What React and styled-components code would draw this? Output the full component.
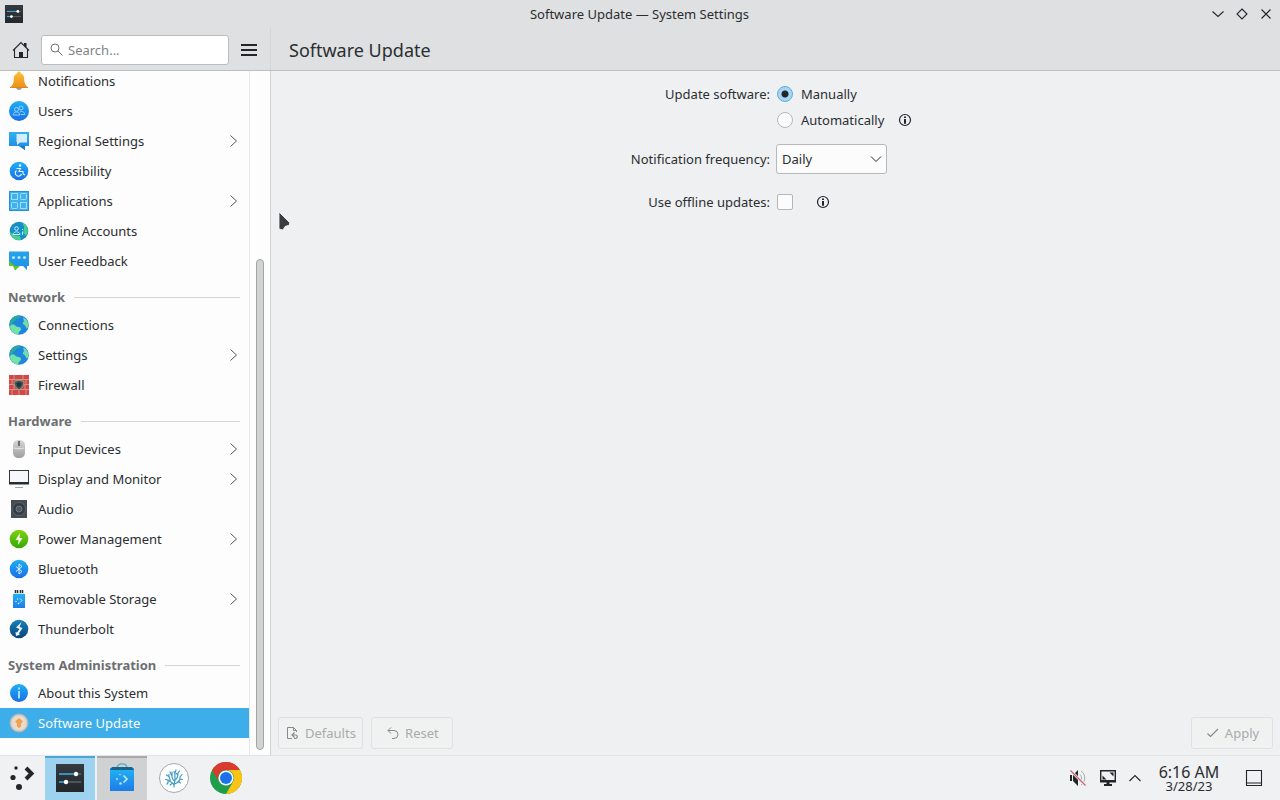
import React, { useState } from "react";
import styled, { createGlobalStyle } from "styled-components";

const GlobalStyle = createGlobalStyle`
  * {
    box-sizing: border-box;
  }
  body {
    margin: 0;
    overflow: hidden;
    font-family: "Noto Sans", sans-serif;
    font-size: 13px;
    color: #2b2e31;
    background-color: #eff0f1;
  }
  button, input, select {
    font-family: inherit;
    font-size: inherit;
    color: inherit;
  }
  svg {
    display: block;
    flex-shrink: 0;
  }
`;

const Desktop = styled.div`
  display: flex;
  flex-direction: column;
  height: 100vh;
`;

const TitleBar = styled.header`
  display: grid;
  grid-template-columns: 1fr auto 1fr;
  align-items: center;
  height: 28px;
  padding: 0 6px 0 5px;
  background-color: #dee0e2;
`;

const WindowTitle = styled.span`
  line-height: 18px;
`;

const WindowButtons = styled.div`
  display: flex;
  justify-content: flex-end;
  gap: 8px;
`;

const IconButton = styled.button`
  display: flex;
  align-items: center;
  justify-content: center;
  width: ${(props) => props.$size || 16}px;
  height: ${(props) => props.$size || 16}px;
  padding: 0;
  border: none;
  background: none;
`;

const ToolBar = styled.div`
  display: flex;
  height: 43px;
  background-color: #dee0e2;
  border-bottom: 1px solid #bcbec0;
`;

const SideTools = styled.div`
  display: flex;
  align-items: center;
  width: 271px;
  padding: 2px 10px 0 9px;
  border-right: 1px solid #d3d5d7;
`;

const SearchBox = styled.label`
  display: flex;
  align-items: center;
  flex: 1;
  gap: 4px;
  height: 30px;
  margin: 0 9px 0 8px;
  padding: 0 8px;
  background-color: white;
  border: 1px solid #bbbdbf;
  border-radius: 3px;
`;

const SearchInput = styled.input`
  width: 100%;
  min-width: 0;
  padding: 0;
  border: none;
  outline: none;
  background: none;
  &::placeholder {
    color: #7f8386;
    opacity: 1;
  }
`;

const PageTitle = styled.h1`
  margin: 0;
  padding-left: 18px;
  font-size: 18px;
  font-weight: normal;
  line-height: 44px;
`;

const Content = styled.div`
  display: flex;
  flex: 1;
  min-height: 0;
`;

const SideBar = styled.aside`
  display: flex;
  width: 271px;
  background-color: #fdfdfd;
  border-right: 1px solid #cfd1d3;
`;

// the list is scrolled to its end, so the first rows are cut at the top
const NavList = styled.nav`
  display: flex;
  flex-direction: column;
  justify-content: flex-end;
  width: 250px;
  padding-bottom: 17px;
  overflow: hidden;
  border-right: 1px solid #e6e7e8;
`;

const SectionTitle = styled.h2`
  display: flex;
  align-items: center;
  flex-shrink: 0;
  gap: 9px;
  height: 34px;
  margin: 0;
  padding: 8px 9px 0 8px;
  font-size: 13px;
  font-weight: bold;
  color: #6c6f71;
  &::after {
    content: "";
    flex: 1;
    height: 1px;
    background-color: #d3d4d5;
  }
`;

const NavItem = styled.a`
  display: flex;
  align-items: center;
  flex-shrink: 0;
  gap: 8px;
  height: 30px;
  padding: 0 11px 0 8px;
  text-decoration: none;
  color: ${(props) => (props.$active ? "#fcfcfc" : "#2b2e31")};
  background-color: ${(props) => (props.$active ? "#3daee9" : "transparent")};
`;

const NavLabel = styled.span`
  flex: 1;
`;

const ScrollTrack = styled.div`
  display: flex;
  flex: 1;
  align-items: flex-end;
  justify-content: center;
  padding-bottom: 5px;
`;

const ScrollThumb = styled.div`
  width: 8px;
  height: calc(72% + 2px);
  border: 1px solid #a3a5a6;
  border-radius: 4px;
  background-color: #d2d3d3;
`;

const Main = styled.main`
  position: relative;
  display: flex;
  flex: 1;
  flex-direction: column;
  justify-content: space-between;
  padding: 10px 7px 6px;
  background-color: #eff0f1;
`;

const Form = styled.form`
  padding-right: 5px;
`;

const FormRow = styled.div`
  display: grid;
  grid-template-columns: 1fr 1fr;
  align-items: center;
  column-gap: 6px;
  height: ${(props) => props.$height}px;
`;

const FieldLabel = styled.label`
  text-align: right;
`;

const Field = styled.div`
  display: flex;
  align-items: center;
`;

const Option = styled.label`
  display: flex;
  align-items: center;
  gap: 8px;
  padding-left: 1px;
`;

const Radio = styled.input`
  appearance: none;
  width: 16px;
  height: 16px;
  margin: 0;
  border: 1px solid #b4b6b8;
  border-radius: 50%;
  background-color: #fcfcfc;
  &:checked {
    border-color: #5aaede;
    background: radial-gradient(circle, #232629 3px, #a6d6f4 4px);
  }
`;

const CheckBox = styled.input`
  width: 16px;
  height: 16px;
  margin: 0 0 0 1px;
  appearance: none;
  border: 1px solid #b4b6b8;
  border-radius: 2px;
  background-color: #fcfcfc;
  &:checked {
    background-color: #3daee9;
  }
`;

const InfoButton = styled(IconButton)`
  margin-left: ${(props) => props.$gap}px;
`;

const SelectBox = styled.div`
  display: grid;
  align-items: center;
  width: 111px;
  > * {
    grid-area: 1 / 1;
  }
  svg {
    justify-self: end;
    margin-right: 5px;
    pointer-events: none;
  }
`;

const Select = styled.select`
  appearance: none;
  width: 100%;
  height: 30px;
  padding: 0 5px;
  border: 1px solid #b6b8ba;
  border-radius: 3px;
  background-color: #fcfcfc;
`;

const Footer = styled.div`
  display: flex;
  gap: 8px;
`;

const Button = styled.button`
  display: flex;
  align-items: center;
  justify-content: center;
  gap: 4px;
  min-width: 82px;
  height: 32px;
  padding: 0 6px;
  color: #a9abac;
  background-color: #f0f1f1;
  border: 1px solid #dfe0e1;
  border-radius: 3px;
  &:last-child {
    margin-left: auto;
  }
`;

const Pointer = styled.svg`
  position: absolute;
  left: 7px;
  top: 140px;
`;

const Panel = styled.footer`
  display: flex;
  align-items: stretch;
  height: 45px;
  background-color: #eff1f2;
  border-top: 1px solid #e2e4e5;
`;

const Launcher = styled(IconButton)`
  width: 43px;
  height: 44px;
  margin-right: 2px;
`;

const Tasks = styled.div`
  display: flex;
  gap: 2px;
`;

const taskColors = {
  active: ["#9dd3ee", "#4ba7d8"],
  open: ["#cfd1d3", "#a7a9ab"],
  pinned: ["transparent", "transparent"],
};

const Task = styled.button`
  display: flex;
  align-items: center;
  justify-content: center;
  width: 50px;
  padding: 0;
  border: none;
  background-color: ${(props) => taskColors[props.$state][0]};
  box-shadow: inset 0 2px ${(props) => taskColors[props.$state][1]};
`;

const Tray = styled.div`
  display: flex;
  align-items: center;
  margin-left: auto;
  padding-right: 15px;
  gap: 8px;
`;

const Clock = styled.div`
  display: flex;
  flex-direction: column;
  align-items: center;
  width: 72px;
  margin: 0 10px 0 2px;
`;

const Time = styled.time`
  font-size: 16px;
  line-height: 16px;
`;

const Day = styled.time`
  font-size: 13px;
  line-height: 12px;
`;

/* ---------- icons ---------- */

const Gradient = ({ id, from, to }) => (
  <linearGradient id={id} x1="0" y1="0" x2="0" y2="1">
    <stop offset="0" stopColor={from} />
    <stop offset="1" stopColor={to} />
  </linearGradient>
);

const Gradients = () => (
  <svg width="0" height="0" aria-hidden="true">
    <defs>
      <Gradient id="blue" from="#1cb0f4" to="#1b6ee6" />
      <Gradient id="sky" from="#31b2f0" to="#1f86e0" />
      <Gradient id="bell" from="#fbc13c" to="#ef8d15" />
      <Gradient id="green" from="#7fd30f" to="#36a806" />
      <Gradient id="teal" from="#1782b8" to="#0b4479" />
      <Gradient id="feedback" from="#25a4ea" to="#1f8ee8" />
      <Gradient id="dark" from="#363b40" to="#23272b" />
      <Gradient id="mouse" from="#d7d7d7" to="#9d9fa0" />
      <Gradient id="bag" from="#22b2f3" to="#1e7ce8" />
    </defs>
  </svg>
);

const Svg = ({ size = 22, children }) => (
  <svg width={size} height={size} viewBox={`0 0 ${size} ${size}`} fill="none" aria-hidden="true">
    {children}
  </svg>
);

const navIcons = {
  bell: (
    <>
      <path d="M8 17h6c0 4-6 4-6 0Z" fill="#9a9da0" />
      <path d="M11 1.500c-1 0-1.700.8-1.700 1.800C6.500 4.200 5.800 6.500 5.800 9.500 5.800 13.400 4.500 15.500 2 17.500h18c-2.500-2-3.800-4.100-3.800-8 0-3-.7-5.300-3.500-6.200C12.700 2.300 12 1.500 11 1.500Z" fill="url(#bell)" />
      <path d="M2 17.500h18" stroke="#d58a1c" />
    </>
  ),
  users: (
    <>
      <circle cx="11" cy="11" r="10" fill="url(#blue)" />
      <g stroke="#9fd8fa" strokeWidth=".9">
        <circle cx="8.500" cy="9.500" r="2" />
        <circle cx="13" cy="8" r="2" />
        <path d="M5 15c.5-4 6.500-4 7 0ZM12 12c2-1.500 4.500 0 4.800 2.500H13" />
      </g>
    </>
  ),
  region: (
    <>
      <path d="M1 2h20v14h-4v4L11 16H1Z" fill="url(#sky)" />
      <path d="M8.500 4H19v8.500h-7L9 15V12H8.500Z" fill="#d5ecfb" />
      <path d="M11 16h6v4Z" fill="#167bc8" />
    </>
  ),
  access: (
    <>
      <circle cx="11" cy="11" r="9.300" fill="url(#blue)" />
      <g stroke="#e8f5fe" strokeWidth="1.100">
        <circle cx="12" cy="5.500" r=".7" fill="#e8f5fe" />
        <path d="M8.500 8.500h4L11 11.500h4V14l2 1M8.500 10.500a3.200 3.200 0 1 0 5 3.500" />
      </g>
    </>
  ),
  apps: (
    <>
      <path d="M1 1h20v20H1Z" fill="#3fb1ee" />
      <path d="M1.500 1.500h19v19h-19Z" stroke="#2491d4" />
      <g stroke="#a5dcf9">
        <rect x="3.500" y="3.500" width="6" height="6" />
        <rect x="12.500" y="3.500" width="6" height="6" rx="1" />
        <rect x="3.500" y="12.500" width="6" height="6" rx="1" />
        <rect x="12.500" y="12.500" width="6" height="6" />
      </g>
    </>
  ),
  online: (
    <>
      <circle cx="11" cy="11" r="9.300" fill="#168fc9" />
      <path d="M1.800 12 6 15l6 1 1 4C7 21 2.500 17 1.800 12ZM14 2.200l4.500 3.300 1.700 5.500-2 5-3-3 1-6Z" fill="#47ce92" />
      <g stroke="#c9edf7" strokeWidth="1">
        <circle cx="8.500" cy="8.500" r="1.800" />
        <path d="M5 14.500c.5-3.600 6.500-3.600 7 0ZM14.500 9v1M14.500 11.500v3.500" />
      </g>
    </>
  ),
  feedback: (
    <>
      <path d="M1 1.500h20v14.500h-2v4l-4-4H1Z" fill="url(#feedback)" />
      <path d="M1 11l6 5H1ZM5 16h7l-5 4.500Z" fill="#5bc625" />
      <g fill="#b5e4fc">
        <circle cx="5.500" cy="7.500" r="1.600" />
        <circle cx="11" cy="7.500" r="1.600" />
        <circle cx="16.500" cy="7.500" r="1.600" />
      </g>
    </>
  ),
  globe: (
    <>
      <circle cx="11" cy="11" r="9.800" fill="#1f86df" />
      <path d="M2 7C4 3.500 7 1.300 11 1.200L12.500 3 10 5 8.500 4.500 7 7 5.500 7.500 4 10 1.300 11Z" fill="#2aa8a0" />
      <path d="M3 10.500 6 10.500 8.500 12.500 12.500 13.500 13 16 11 18 10 20.700C6 20 2.500 17 2 13Z" fill="#71e3a3" />
      <path d="M15 3.500 18 5 20.500 9 20.600 13 18.500 14.500 17 11.500 14.500 9.500 16 7Z" fill="#6fdba6" />
    </>
  ),
  firewall: (
    <>
      <path d="M1 1h20v20H1Z" fill="#cf4a45" />
      <path d="M1 5.500h20M1 10.500h20M1 15.500h20M6 1v4M15 1v4M4 6v4M18 6v4M6 11v4M17 11v4M4 16v5M11 16v5M18 16v5" stroke="#dd8e89" />
      <path d="M11 6 16 7.500c0 4-1.500 6.500-5 8.500-3.500-2-5-4.500-5-8.500Z" fill="#415b55" stroke="#a79b8e" />
      <path d="m11 8 2.500 1c0 2-.8 3.500-2.500 4.500C9.300 12.500 8.500 11 8.500 9Z" fill="#263238" />
    </>
  ),
  mouse: (
    <>
      <path d="M11 2c4 0 6 2 6 6v6c0 4-2 6-6 6s-6-2-6-6V8c0-4 2-6 6-6Z" fill="url(#mouse)" />
      <path d="M11 3v5" stroke="#6d7072" strokeWidth="2" />
      <path d="M6 10c3 1 7 1 10 0" stroke="#e6e6e6" />
    </>
  ),
  display: (
    <>
      <rect x="1.500" y="2.500" width="19" height="13" fill="#f5f7fa" stroke="#33373b" />
      <path d="M1 14h20v2.500H1Z" fill="#292d31" />
      <path d="M7 19.500h8" stroke="#a2a5a8" />
    </>
  ),
  audio: (
    <>
      <path d="M3 2h16v18H3Z" fill="#454c53" />
      <circle cx="11" cy="11" r="6.500" fill="#343b42" stroke="#59626a" />
      <circle cx="11" cy="11" r="3" fill="#4f5961" stroke="#6d7882" />
    </>
  ),
  power: (
    <>
      <circle cx="11" cy="11" r="9.300" fill="url(#green)" />
      <path d="M12 5 7.500 12h3L10 17l4.500-7h-3Z" fill="#f4fcec" />
    </>
  ),
  bluetooth: (
    <>
      <circle cx="11" cy="11" r="9.300" fill="url(#blue)" />
      <path d="m8 8.500 6 5-3 2.500V6l3 2.500-6 5" stroke="#d8f0ff" />
    </>
  ),
  usb: (
    <>
      <path d="M6 2h10v5H6Z" fill="#dcdddd" />
      <path d="M7.500 2v3M9.500 2v3M12.500 2v3M14.500 2v3" stroke="#2c3033" strokeWidth="1.300" />
      <path d="M5 6h12v14H5Z" fill="url(#bag)" />
      <path d="m12 10.500 2 2-2 2" stroke="#d8f0ff" />
      <g fill="#d8f0ff">
        <circle cx="9.500" cy="11" r=".7" />
        <circle cx="8" cy="13.500" r=".7" />
        <circle cx="10.500" cy="15.500" r=".8" />
      </g>
    </>
  ),
  thunder: (
    <>
      <circle cx="11" cy="11" r="9.300" fill="url(#teal)" />
      <path d="M13.500 4 8 9.500l3.500 1.500-2.500 3.500-1.500-.5L8 18l4-1.500-1.200-1L14.500 10 11.500 9Z" fill="#e9f6fb" />
    </>
  ),
  about: (
    <>
      <circle cx="11" cy="11" r="9" fill="url(#blue)" />
      <path d="M10 5.500h2v2h-2ZM10 9h2v7.500h-2Z" fill="#a9ddfc" />
    </>
  ),
  update: (
    <>
      <circle cx="11" cy="11" r="9" fill="#cfcac3" stroke="#b6b6b4" />
      <circle cx="11" cy="11" r="7.300" fill="#e9dcca" />
      <path d="M11 6 15 9.500 13 11.500v3l-2 1.500-2-1.500v-3L7 9.500Z" fill="#f2a04f" />
    </>
  ),
};

const SettingsLogo = ({ size }) => (
  <svg width={size} height={size} viewBox="0 0 28 28" aria-hidden="true">
    <path d="M0 0h28v28H0Z" fill="url(#dark)" />
    <path d="M3 10h17M3 18h7" stroke="#3daee9" strokeWidth="1.500" />
    <path d="M20 10h5M10 18h15" stroke="#5c6266" strokeWidth="1.500" />
    <circle cx="20" cy="10" r="2.200" fill="#fff" />
    <circle cx="10" cy="18" r="2.200" fill="#fff" />
  </svg>
);

const Chevron = () => (
  <svg width="9" height="12" viewBox="0 0 9 12" fill="none" aria-hidden="true">
    <path d="m1.500.5 6 5.500-6 5.500" stroke="#54575a" />
  </svg>
);

const InfoIcon = () => (
  <Svg size={16}>
    <circle cx="8" cy="8" r="5.500" stroke="#232629" strokeWidth="1.200" />
    <path d="M7 4.500h2v1.600H7ZM7 7h2v4.700H7Z" fill="#232629" />
  </Svg>
);

const navigation = [
  {
    items: [
      ["Notifications", "bell"],
      ["Users", "users"],
      ["Regional Settings", "region", true],
      ["Accessibility", "access"],
      ["Applications", "apps", true],
      ["Online Accounts", "online"],
      ["User Feedback", "feedback"],
    ],
  },
  {
    title: "Network",
    items: [
      ["Connections", "globe"],
      ["Settings", "globe", true],
      ["Firewall", "firewall"],
    ],
  },
  {
    title: "Hardware",
    items: [
      ["Input Devices", "mouse", true],
      ["Display and Monitor", "display", true],
      ["Audio", "audio"],
      ["Power Management", "power", true],
      ["Bluetooth", "bluetooth"],
      ["Removable Storage", "usb", true],
      ["Thunderbolt", "thunder"],
    ],
  },
  {
    title: "System Administration",
    items: [
      ["About this System", "about"],
      ["Software Update", "update"],
    ],
  },
];

const Navigation = () => {
  const [current, setCurrent] = useState("Software Update");

  return (
    <NavList>
      {navigation.map((section, index) => (
        <React.Fragment key={index}>
          {section.title && <SectionTitle>{section.title}</SectionTitle>}
          {section.items.map(([label, icon, nested]) => (
            <NavItem
              key={label}
              href="#"
              $active={label === current}
              onClick={(e) => {
                e.preventDefault();
                setCurrent(label);
              }}
            >
              <Svg>{navIcons[icon]}</Svg>
              <NavLabel>{label}</NavLabel>
              {nested && <Chevron />}
            </NavItem>
          ))}
        </React.Fragment>
      ))}
    </NavList>
  );
};

const UpdateForm = () => {
  const [mode, setMode] = useState("manual");
  const [offline, setOffline] = useState(false);

  return (
    <Form>
      <FormRow $height={26}>
        <FieldLabel as="span">Update software:</FieldLabel>
        <Option>
          <Radio type="radio" name="mode" checked={mode === "manual"} onChange={() => setMode("manual")} />
          Manually
        </Option>
      </FormRow>
      <FormRow $height={26}>
        <span />
        <Field>
          <Option>
            <Radio type="radio" name="mode" checked={mode === "auto"} onChange={() => setMode("auto")} />
            Automatically
          </Option>
          <InfoButton type="button" $gap={13} aria-label="About automatic updates">
            <InfoIcon />
          </InfoButton>
        </Field>
      </FormRow>
      <FormRow $height={52}>
        <FieldLabel htmlFor="frequency">Notification frequency:</FieldLabel>
        <SelectBox>
          <Select id="frequency" defaultValue="Daily">
            <option>Daily</option>
          </Select>
          <svg width="12" height="8" viewBox="0 0 12 8" fill="none">
            <path d="m1 1.500 5 5 5-5" stroke="#232629" />
          </svg>
        </SelectBox>
      </FormRow>
      <FormRow $height={34}>
        <FieldLabel htmlFor="offline">Use offline updates:</FieldLabel>
        <Field>
          <CheckBox id="offline" type="checkbox" checked={offline} onChange={(e) => setOffline(e.target.checked)} />
          <InfoButton type="button" $gap={22} aria-label="About offline updates">
            <InfoIcon />
          </InfoButton>
        </Field>
      </FormRow>
    </Form>
  );
};

const DiscoverLogo = () => (
  <Svg size={32}>
    <path d="M11 6c0-5.500 10-5.500 10 0" stroke="#56a9b8" strokeWidth="1.200" />
    <path d="M4 6h24v23H4Z" fill="url(#bag)" />
    <path d="M6 5h20l2 3H4Z" fill="#17648f" />
    <path d="m17.500 13.500 3.500 3.500-3.500 3.500" stroke="#c8ebfe" strokeWidth="1.500" />
    <g fill="#b4e2fd">
      <circle cx="14" cy="12.500" r=".8" />
      <circle cx="11" cy="17" r="1.100" />
      <circle cx="14.500" cy="21.500" r="1.300" />
    </g>
  </Svg>
);

const CoralLogo = () => (
  <Svg size={32}>
    <circle cx="16" cy="16" r="14.500" fill="#fdfefe" stroke="#a3a9ae" />
    <g stroke="#4599c4" strokeWidth="1.200" strokeLinecap="round" strokeLinejoin="round">
      <path d="M16 25c0-4 1-5 1-8s-1-5 1-9M16 23c-1-3-4-3-6-5l-2.500-.5M10 18v3l-1 1M12 19.500c1-3-2-4-1-7M11.500 15 8.500 13M16.500 19c-3-2-2.500-4-2.500-9M14 14l-2-4M16.500 22c3-1 6-3 5.500-7l2-2.500M22 17l2.500.5M17 18c3-2 3-4 3-7l1.500-2M20 13l-1.500-1.500M20 19.500l2.500 1.500M17 12l-1-2.500M14 21.500l-2 1.500" />
    </g>
  </Svg>
);

const ChromeLogo = () => (
  <Svg size={32}>
    <circle cx="16" cy="16" r="16" fill="#1e9e4a" />
    <path d="M2.140 8A16 16 0 0 1 29.860 8H16a8 8 0 0 0-6.930 12Z" fill="#db3b2e" />
    <path d="M29.860 8A16 16 0 0 1 16 32l6.930-12A8 8 0 0 0 16 8Z" fill="#fbc415" />
    <circle cx="16" cy="16" r="7.600" fill="#fff" />
    <circle cx="16" cy="16" r="6" fill="#1c72ea" />
  </Svg>
);

const App = () => {
  return (
    <Desktop>
      <GlobalStyle />
      <Gradients />

      <TitleBar>
        <SettingsLogo size={18} />
        <WindowTitle>Software Update — System Settings</WindowTitle>
        <WindowButtons>
          <IconButton aria-label="Minimize">
            <Svg size={16}>
              <path d="m2.500 5.500 5.500 5 5.500-5" stroke="#232629" strokeWidth="1.100" />
            </Svg>
          </IconButton>
          <IconButton aria-label="Maximize">
            <Svg size={16}>
              <path d="m8 3 5 5-5 5-5-5Z" stroke="#232629" strokeWidth="1.100" />
            </Svg>
          </IconButton>
          <IconButton aria-label="Close">
            <Svg size={16}>
              <path d="m3.500 3.500 9 9m0-9-9 9" stroke="#232629" strokeWidth="1.100" />
            </Svg>
          </IconButton>
        </WindowButtons>
      </TitleBar>

      <ToolBar>
        <SideTools>
          <IconButton $size={24} aria-label="Home">
            <Svg>
              <path d="M3 11.500 11 3.500l8 8M4.500 10.500v8h13v-8" stroke="#232629" strokeWidth="1.100" />
              <path d="M9 13h4v6H9ZM14 4h2.500v5L14 6.500Z" fill="#232629" />
            </Svg>
          </IconButton>
          <SearchBox>
            <svg width="14" height="14" viewBox="0 0 14 14" fill="none">
              <circle cx="5" cy="5" r="4" stroke="#6e7174" />
              <path d="m8 8 4.500 4.500" stroke="#6e7174" />
            </svg>
            <SearchInput type="text" placeholder="Search..." aria-label="Search" />
          </SearchBox>
          <IconButton $size={22} aria-label="Menu">
            <Svg>
              <path d="M3 6h16M3 11h16M3 16h16" stroke="#232629" strokeWidth="2" />
            </Svg>
          </IconButton>
        </SideTools>
        <PageTitle>Software Update</PageTitle>
      </ToolBar>

      <Content>
        <SideBar>
          <Navigation />
          <ScrollTrack>
            <ScrollThumb />
          </ScrollTrack>
        </SideBar>
        <Main>
          <UpdateForm />
          <Footer>
            <Button disabled>
              <Svg size={16}>
                <path d="M11.500 7V5.500l-3-3h-6v11H7M8.500 2.500v3h3" stroke="#88898a" />
                <path d="M9.500 7.500 7 10l2.500 2.500M7 10h3.500a1.700 1.700 0 0 1 0 3.500H9" stroke="#88898a" strokeWidth="1.200" />
              </Svg>
              Defaults
            </Button>
            <Button disabled>
              <Svg size={16}>
                <path d="M6 2.500 3 5.500l3 3M3 5.500h6a4 4 0 0 1 0 8H7" stroke="#88898a" />
              </Svg>
              Reset
            </Button>
            <Button disabled>
              <Svg size={16}>
                <path d="m2.500 8.500 3 3 7.500-7.500" stroke="#88898a" strokeWidth="1.200" />
              </Svg>
              Apply
            </Button>
          </Footer>
          <Pointer width="13" height="22" viewBox="0 0 13 22">
            <path d="M1 1 11.500 11.500v2.500L7 15.500 5 19 1 18Z" fill="#3a3d40" stroke="#fafafa" strokeWidth=".8" />
          </Pointer>
        </Main>
      </Content>

      <Panel>
        <Launcher aria-label="Application launcher">
          <Svg size={26}>
            <path d="m17 3 5.500 5.500L17 14" stroke="#232629" strokeWidth="4" />
            <g fill="#232629">
              <circle cx="7" cy="3" r="1.700" />
              <circle cx="4" cy="12.500" r="2.600" />
              <circle cx="10" cy="22" r="3" />
            </g>
          </Svg>
        </Launcher>
        <Tasks>
          <Task $state="active" aria-label="System Settings">
            <SettingsLogo size={28} />
          </Task>
          <Task $state="open" aria-label="Discover">
            <DiscoverLogo />
          </Task>
          <Task $state="pinned" aria-label="Coral">
            <CoralLogo />
          </Task>
          <Task $state="pinned" aria-label="Chrome">
            <ChromeLogo />
          </Task>
        </Tasks>
        <Tray>
          <IconButton $size={22} aria-label="Volume">
            <Svg>
              <path d="M3 8h2v6H3ZM6 8l5-5v16l-5-5Z" fill="#232629" />
              <path d="M13 7.500c2 2 2 5 0 7M14 4c5 3 5 11 0 14" stroke="#a9abad" />
              <path d="m3.500 3.500 15 15" stroke="#eff1f2" strokeWidth="2.500" />
              <path d="m3.500 3.500 15 15" stroke="#c66577" strokeWidth="1.200" />
            </Svg>
          </IconButton>
          <IconButton $size={22} aria-label="Display">
            <Svg>
              <path d="M3.700 3.700h14.600v10.600H3.700Z" stroke="#232629" strokeWidth="1.400" />
              <path d="M3 13h16v2.500H3ZM9.500 15h3v3h-3ZM7 17h8v2H7ZM12.500 5.500h4v4ZM5.500 8.500v4h4Z" fill="#232629" />
            </Svg>
          </IconButton>
          <IconButton aria-label="Show hidden icons">
            <Svg size={16}>
              <path d="m2.500 11 5.500-5.500 5.500 5.500" stroke="#232629" strokeWidth="1.100" />
            </Svg>
          </IconButton>
          <Clock>
            <Time>6:16 AM</Time>
            <Day>3/28/23</Day>
          </Clock>
          <IconButton $size={22} aria-label="Show desktop">
            <Svg>
              <path d="M3.500 3.500h15v15h-15ZM4 16h14" stroke="#232629" strokeWidth="1.100" />
            </Svg>
          </IconButton>
        </Tray>
      </Panel>
    </Desktop>
  );
};

export default App;
